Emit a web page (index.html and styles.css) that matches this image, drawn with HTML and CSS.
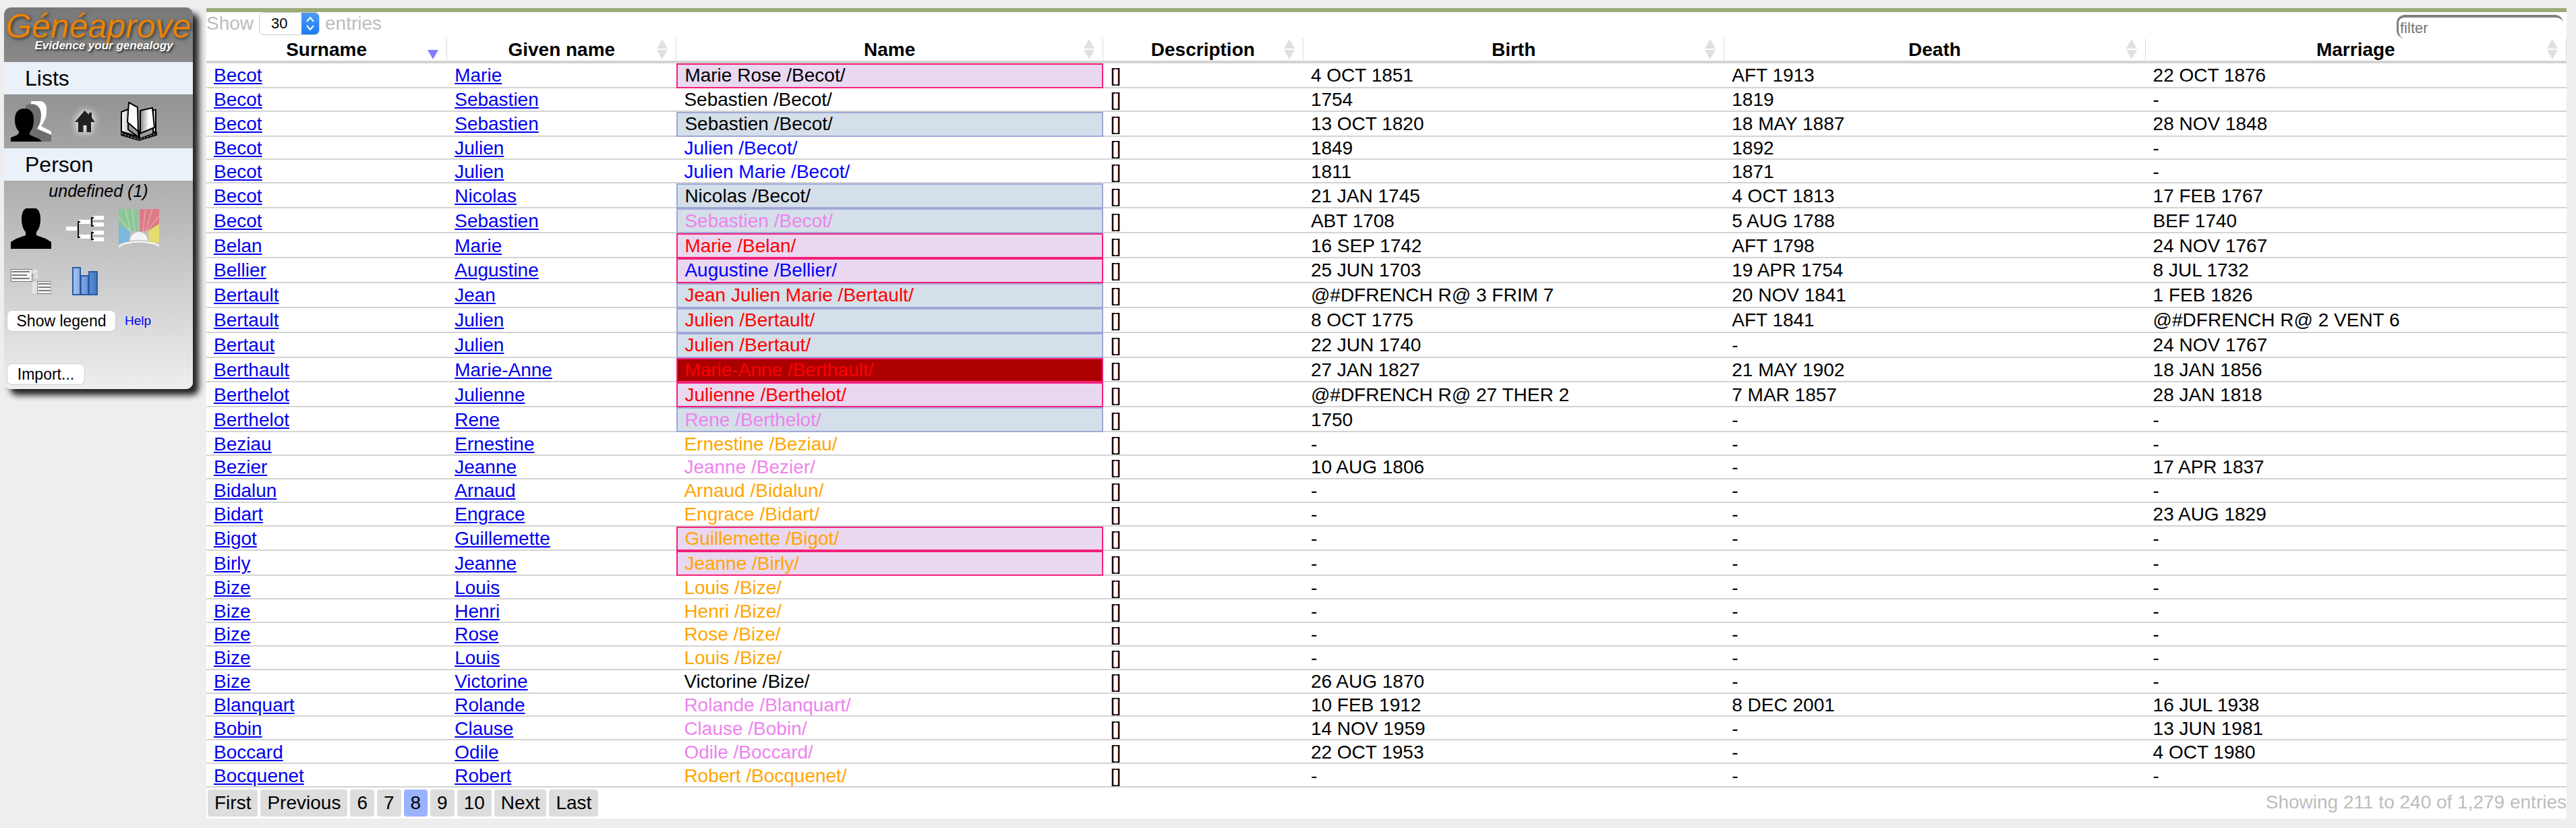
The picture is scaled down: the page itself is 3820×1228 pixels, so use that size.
FILE: index.html
```html
<!DOCTYPE html>
<html lang="fr">
<head>
    <meta charset="UTF-8">
    <title>Généaprove</title>
    <link rel="stylesheet" href="styles.css">
</head>
<body>

    <aside class="sidebar">
        <div class="logo">
            <div class="logo-name">Généaprove</div>
            <div class="logo-tag">Evidence your genealogy</div>
        </div>

        <div class="side-bar-title">Lists</div>
        <div class="icon-grid icon-grid-top">
            <svg width="60" height="60" viewBox="0 0 60 60">
                <path d="M30 0h15q8 2 8 12 0 12-3 16-2 5-5 9l15 8v9H30z" fill="#fff"/>
                <path d="M22 6q8-3 14-1 8 3 9 14 0 12-4 18l-2 4 21 9v10H20z" fill="#6e6e6e"/>
                <path d="M20 11q14 0 14 17 0 12-6 18v4l14 6 4 4H0v-6l10-4 2-3v-2q-6-6-6-17 0-17 14-17z" fill="#000"/>
            </svg>
            <svg class="home-icon" width="30" height="32" viewBox="0 0 30 32">
                <path d="M14.500 0 21 6V3h4v7l4.500 7H24v15h-6.500V22h-5v10H5V17H0L14.500 0z" fill="#222"/>
            </svg>
            <svg width="58" height="58" viewBox="0 0 58 58">
                <defs>
                    <linearGradient id="page-right"><stop offset="0" stop-color="#888"/><stop offset="0.6" stop-color="#fff"/></linearGradient>
                    <linearGradient id="page-left"><stop offset="0" stop-color="#fff"/><stop offset="1" stop-color="#777"/></linearGradient>
                </defs>
                <path d="M2 44 29 54l27-10v6L29 58 2 50z" fill="#111"/>
                <path d="M3 15 13 11v30l15 11L3 44z" fill="url(#page-left)" stroke="#000" stroke-width="2"/>
                <path d="M50 12h4v32l-4 2z" fill="#ccc" stroke="#000" stroke-width="2"/>
                <path d="M31 13 49 9l3 29-21 9z" fill="url(#page-right)" stroke="#000" stroke-width="2"/>
                <path d="M14 1 27 8l1 36-16-14z" fill="#fff" stroke="#000" stroke-width="2"/>
                <path d="M28 42 30 56" stroke="#000" stroke-width="3"/>
                <path d="M3 47 29 56 55 47" fill="none" stroke="#ddd" stroke-width="1" stroke-dasharray="2 3"/>
            </svg>
        </div>

        <div class="side-bar-title">Person</div>
        <div class="person-name">undefined (1)</div>
        <div class="icon-grid icon-grid-person">
            <svg width="60" height="60" viewBox="0 0 60 60">
                <path d="M30 -2q14 0 14 18 0 13-6 19v5l14 5 8 5v10H0V50l8-5 14-5v-5q-6-6-6-19 0-18 14-18z" fill="#000"/>
            </svg>
            <svg width="56" height="38" viewBox="0 0 56 38">
                <path d="M0 16h16v6H0zM19 6h17v6H19zM19 28h17v6H19zM40 0h16v6H40zM40 10h16v6H40zM40 22h16v6H40zM40 32h16v6H40z" fill="#fff"/>
                <path d="M21 9h-3v23h3M41 3h-3v12h3M41 25h-3v10h3" fill="none" stroke="#111" stroke-width="2"/>
            </svg>
            <svg width="60" height="58" viewBox="0 0 60 58">
                <path d="M0 0h29v33H17l-17-10z" fill="#8cc596"/>
                <path d="M31 0h29v22L43 33H31z" fill="#dc7b85"/>
                <path d="M60 22v28H45q0-10-2-17z" fill="#e4dc6c"/>
                <path d="M0 23l17 10-2 15-15 4z" fill="#7ab8dd"/>
                <path d="M10 0 18 33M20 0 24 33M40 0 36 33M50 0 40 33M0 12 17 33M60 10 42 33" stroke="#fff" stroke-opacity="0.25" stroke-width="2"/>
                <path d="M17 47a13 13 0 0 1 26 0q-13-2-26 0z" fill="#f4f4f4"/>
                <path d="M0 57Q2 52 15 50q15-3 30 0 13 2 15 5" fill="none" stroke="#f4f4f4" stroke-width="2.500"/>
            </svg>
            <svg width="60" height="37" viewBox="0 0 60 37">
                <path d="M.500 .500h31v18h-31zM39.500 18.500h20.500v18H39.500z" fill="#f4f4f4" stroke="#777"/>
                <path d="M31.500 1h8v6h-8zM36 8h4v6h-4zM32 19h7v17h-7z" fill="#e4e4e4"/>
                <path d="M2 4h26M2 9h22M2 14h26M41 22h18M41 27h18M41 32h18" stroke="#555" stroke-width="1.500"/>
            </svg>
            <svg width="38" height="42" viewBox="0 0 38 42">
                <defs>
                    <linearGradient id="bar-fill"><stop offset="0" stop-color="#a8c6ee"/><stop offset="1" stop-color="#3c74c4"/></linearGradient>
                </defs>
                <path d="M1 1h11v40H1zM13 13h11v28H13zM25 7h12v34H25z" fill="url(#bar-fill)" stroke="#2a5aa8" stroke-width="2"/>
            </svg>
        </div>

        <div class="legend-row">
            <button class="side-button legend-button">Show legend</button>
            <a class="help-link" href="#">Help</a>
        </div>
        <button class="side-button import-button">Import...</button>
    </aside>

    <main class="panel">
        <div class="table-top">
            <div class="length-control">
                Show
                <span class="select-box"><span class="select-value">30</span><span class="select-arrows">
                    <svg width="14" height="24" viewBox="0 0 14 24"><path d="M2 9l5-6 5 6M2 15l5 6 5-6" fill="none" stroke="#fff" stroke-width="2"/></svg>
                </span></span>
                entries
            </div>
            <input class="filter-input" type="text" placeholder="filter">
        </div>

        <table class="people">
            <colgroup>
                <col class="col-surname"><col class="col-given"><col class="col-name"><col class="col-desc"><col class="col-date"><col class="col-date"><col class="col-date">
            </colgroup>
            <thead>
                <tr>
                    <th class="sort-desc">Surname</th>
                    <th class="sortable">Given name</th>
                    <th class="sortable">Name</th>
                    <th class="sortable">Description</th>
                    <th class="sortable">Birth</th>
                    <th class="sortable">Death</th>
                    <th class="sortable">Marriage</th>
                </tr>
            </thead>
            <tbody>
                <tr class="tall"><td><a href="#">Becot</a></td><td><a href="#">Marie</a></td><td class="box-pink">Marie Rose /Becot/</td><td>[]</td><td>4 OCT 1851</td><td>AFT 1913</td><td>22 OCT 1876</td></tr>
                <tr><td><a href="#">Becot</a></td><td><a href="#">Sebastien</a></td><td>Sebastien /Becot/</td><td>[]</td><td>1754</td><td>1819</td><td>-</td></tr>
                <tr class="tall"><td><a href="#">Becot</a></td><td><a href="#">Sebastien</a></td><td class="box-blue">Sebastien /Becot/</td><td>[]</td><td>13 OCT 1820</td><td>18 MAY 1887</td><td>28 NOV 1848</td></tr>
                <tr><td><a href="#">Becot</a></td><td><a href="#">Julien</a></td><td class="txt-blue">Julien /Becot/</td><td>[]</td><td>1849</td><td>1892</td><td>-</td></tr>
                <tr><td><a href="#">Becot</a></td><td><a href="#">Julien</a></td><td class="txt-blue">Julien Marie /Becot/</td><td>[]</td><td>1811</td><td>1871</td><td>-</td></tr>
                <tr class="tall"><td><a href="#">Becot</a></td><td><a href="#">Nicolas</a></td><td class="box-blue">Nicolas /Becot/</td><td>[]</td><td>21 JAN 1745</td><td>4 OCT 1813</td><td>17 FEB 1767</td></tr>
                <tr class="tall"><td><a href="#">Becot</a></td><td><a href="#">Sebastien</a></td><td class="box-blue txt-violet">Sebastien /Becot/</td><td>[]</td><td>ABT 1708</td><td>5 AUG 1788</td><td>BEF 1740</td></tr>
                <tr class="tall"><td><a href="#">Belan</a></td><td><a href="#">Marie</a></td><td class="box-pink txt-red">Marie /Belan/</td><td>[]</td><td>16 SEP 1742</td><td>AFT 1798</td><td>24 NOV 1767</td></tr>
                <tr class="tall"><td><a href="#">Bellier</a></td><td><a href="#">Augustine</a></td><td class="box-pink txt-blue">Augustine /Bellier/</td><td>[]</td><td>25 JUN 1703</td><td>19 APR 1754</td><td>8 JUL 1732</td></tr>
                <tr class="tall"><td><a href="#">Bertault</a></td><td><a href="#">Jean</a></td><td class="box-blue txt-red">Jean Julien Marie /Bertault/</td><td>[]</td><td>@#DFRENCH R@ 3 FRIM 7</td><td>20 NOV 1841</td><td>1 FEB 1826</td></tr>
                <tr class="tall"><td><a href="#">Bertault</a></td><td><a href="#">Julien</a></td><td class="box-blue txt-red">Julien /Bertault/</td><td>[]</td><td>8 OCT 1775</td><td>AFT 1841</td><td>@#DFRENCH R@ 2 VENT 6</td></tr>
                <tr class="tall"><td><a href="#">Bertaut</a></td><td><a href="#">Julien</a></td><td class="box-blue txt-red">Julien /Bertaut/</td><td>[]</td><td>22 JUN 1740</td><td>-</td><td>24 NOV 1767</td></tr>
                <tr class="tall"><td><a href="#">Berthault</a></td><td><a href="#">Marie-Anne</a></td><td class="box-dark txt-red">Marie-Anne /Berthault/</td><td>[]</td><td>27 JAN 1827</td><td>21 MAY 1902</td><td>18 JAN 1856</td></tr>
                <tr class="tall"><td><a href="#">Berthelot</a></td><td><a href="#">Julienne</a></td><td class="box-pink txt-red">Julienne /Berthelot/</td><td>[]</td><td>@#DFRENCH R@ 27 THER 2</td><td>7 MAR 1857</td><td>28 JAN 1818</td></tr>
                <tr class="tall"><td><a href="#">Berthelot</a></td><td><a href="#">Rene</a></td><td class="box-blue txt-violet">Rene /Berthelot/</td><td>[]</td><td>1750</td><td>-</td><td>-</td></tr>
                <tr><td><a href="#">Beziau</a></td><td><a href="#">Ernestine</a></td><td class="txt-orange">Ernestine /Beziau/</td><td>[]</td><td>-</td><td>-</td><td>-</td></tr>
                <tr><td><a href="#">Bezier</a></td><td><a href="#">Jeanne</a></td><td class="txt-violet">Jeanne /Bezier/</td><td>[]</td><td>10 AUG 1806</td><td>-</td><td>17 APR 1837</td></tr>
                <tr><td><a href="#">Bidalun</a></td><td><a href="#">Arnaud</a></td><td class="txt-orange">Arnaud /Bidalun/</td><td>[]</td><td>-</td><td>-</td><td>-</td></tr>
                <tr><td><a href="#">Bidart</a></td><td><a href="#">Engrace</a></td><td class="txt-orange">Engrace /Bidart/</td><td>[]</td><td>-</td><td>-</td><td>23 AUG 1829</td></tr>
                <tr class="tall"><td><a href="#">Bigot</a></td><td><a href="#">Guillemette</a></td><td class="box-pink txt-orange">Guillemette /Bigot/</td><td>[]</td><td>-</td><td>-</td><td>-</td></tr>
                <tr class="tall"><td><a href="#">Birly</a></td><td><a href="#">Jeanne</a></td><td class="box-pink txt-orange">Jeanne /Birly/</td><td>[]</td><td>-</td><td>-</td><td>-</td></tr>
                <tr><td><a href="#">Bize</a></td><td><a href="#">Louis</a></td><td class="txt-orange">Louis /Bize/</td><td>[]</td><td>-</td><td>-</td><td>-</td></tr>
                <tr><td><a href="#">Bize</a></td><td><a href="#">Henri</a></td><td class="txt-orange">Henri /Bize/</td><td>[]</td><td>-</td><td>-</td><td>-</td></tr>
                <tr><td><a href="#">Bize</a></td><td><a href="#">Rose</a></td><td class="txt-orange">Rose /Bize/</td><td>[]</td><td>-</td><td>-</td><td>-</td></tr>
                <tr><td><a href="#">Bize</a></td><td><a href="#">Louis</a></td><td class="txt-orange">Louis /Bize/</td><td>[]</td><td>-</td><td>-</td><td>-</td></tr>
                <tr><td><a href="#">Bize</a></td><td><a href="#">Victorine</a></td><td>Victorine /Bize/</td><td>[]</td><td>26 AUG 1870</td><td>-</td><td>-</td></tr>
                <tr><td><a href="#">Blanquart</a></td><td><a href="#">Rolande</a></td><td class="txt-violet">Rolande /Blanquart/</td><td>[]</td><td>10 FEB 1912</td><td>8 DEC 2001</td><td>16 JUL 1938</td></tr>
                <tr><td><a href="#">Bobin</a></td><td><a href="#">Clause</a></td><td class="txt-violet">Clause /Bobin/</td><td>[]</td><td>14 NOV 1959</td><td>-</td><td>13 JUN 1981</td></tr>
                <tr><td><a href="#">Boccard</a></td><td><a href="#">Odile</a></td><td class="txt-violet">Odile /Boccard/</td><td>[]</td><td>22 OCT 1953</td><td>-</td><td>4 OCT 1980</td></tr>
                <tr><td><a href="#">Bocquenet</a></td><td><a href="#">Robert</a></td><td class="txt-orange">Robert /Bocquenet/</td><td>[]</td><td>-</td><td>-</td><td>-</td></tr>
            </tbody>
        </table>

        <div class="table-bottom">
            <div class="pager">
                <a class="page-button" href="#">First</a>
                <a class="page-button" href="#">Previous</a>
                <a class="page-button" href="#">6</a>
                <a class="page-button" href="#">7</a>
                <a class="page-button current" href="#">8</a>
                <a class="page-button" href="#">9</a>
                <a class="page-button" href="#">10</a>
                <a class="page-button" href="#">Next</a>
                <a class="page-button" href="#">Last</a>
            </div>
            <div class="table-info">Showing 211 to 240 of 1,279 entries</div>
        </div>
    </main>

</body>
</html>
```

FILE: styles.css
```css
html {
    height: 100%;
}

body {
    margin: 0;
    padding: 11px 14px 14px 6px;
    box-sizing: border-box;
    height: 1228px;
    overflow: hidden;
    display: flex;
    align-items: flex-start;
    gap: 20px;
    background-color: #eeeeee;
    color: #000;
    font-family: "Liberation Sans", Arial, sans-serif;
    font-size: 28px;
}

/* left menu */
.sidebar {
    flex: 0 0 280px;
    height: 566px;
    border-radius: 10px;
    background: linear-gradient(to bottom, #787878 0%, #eeeeee 100%);
    box-shadow: 9px 9px 10px #222;
}

.logo {
    height: 81px;
    padding-top: 4px;
    box-sizing: border-box;
    text-align: center;
}

.logo-name {
    font-size: 50px;
    line-height: 49px;
    font-style: italic;
    color: #ea8207;
    text-shadow: 2px 2px 5px #333;
}

.logo-tag {
    margin-top: -5px;
    padding-left: 16px;
    font-size: 17px;
    line-height: 17px;
    font-weight: bold;
    font-style: italic;
    color: #fff;
    text-shadow: 2px 2px 3px #222;
}

.side-bar-title {
    height: 48px;
    padding-left: 31px;
    line-height: 48px;
    font-size: 32px;
    background-color: #eaf1f9;
}

.icon-grid {
    display: grid;
    grid-template-columns: repeat(3, 80px);
    justify-items: center;
    align-items: center;
}

.icon-grid-top {
    height: 80px;
}

.home-icon {
    filter: drop-shadow(0 0 5px #e8e8e8) drop-shadow(0 0 5px #d0d0d0);
}

.person-name {
    height: 41px;
    line-height: 30px;
    text-align: center;
    font-size: 25px;
    font-style: italic;
}

.icon-grid-person {
    grid-template-rows: 60px 42px;
    row-gap: 27px;
}

.legend-row {
    display: flex;
    align-items: center;
    gap: 13px;
    margin: 22px 0 0 4px;
}

.side-button {
    height: 32px;
    padding: 0;
    border: 1px solid #ccc;
    border-radius: 8px;
    background-color: #fff;
    font-family: inherit;
    font-size: 23px;
    color: #000;
}

.legend-button {
    width: 162px;
}

.import-button {
    display: block;
    width: 116px;
    margin: 47px 0 0 4px;
}

.help-link {
    font-size: 19px;
    color: #0000ff;
    text-decoration: none;
}

/* main panel */
.panel {
    flex: 1;
    margin-top: 1px;
    border-top: 6px solid #9dab78;
    background-color: #fff;
}

.table-top {
    height: 39px;
    display: flex;
    justify-content: space-between;
}

.length-control {
    display: flex;
    align-items: center;
    gap: 8px;
    height: 34px;
    color: #bdbdbd;
}

.select-box {
    display: flex;
    width: 90px;
    height: 34px;
    box-sizing: border-box;
    border: 1px solid #ccc;
    border-radius: 7px;
    overflow: hidden;
    background-color: #fff;
}

.select-value {
    flex: 1;
    padding-left: 17px;
    font-size: 22px;
    line-height: 32px;
    color: #000;
}

.select-arrows {
    display: flex;
    align-items: center;
    justify-content: center;
    width: 26px;
    background: linear-gradient(to bottom, #4b9bf0, #1c7cf8);
}

.filter-input {
    width: 247px;
    height: 35px;
    margin: 4px 5px 0 0;
    padding: 0 0 0 2px;
    box-sizing: border-box;
    border: 0;
    border-top: 4px solid #808080;
    border-left: 3px solid #808080;
    border-radius: 12px;
    font-family: inherit;
    font-size: 22px;
    outline: none;
}

.filter-input::placeholder {
    color: #757575;
}

.people {
    width: 100%;
    table-layout: fixed;
    border-collapse: separate;
    border-spacing: 0;
}

.col-surname { width: 357px; }
.col-given { width: 340px; }
.col-name { width: 632px; }
.col-desc { width: 297px; }
.col-date { width: 624px; }

.people th {
    position: relative;
    height: 37px;
    padding: 0;
    box-sizing: border-box;
    border-right: 1px solid #ddd;
    border-bottom: 4px solid #d3d3d3;
    font-weight: bold;
    text-align: center;
}

/* sort arrows */
.sortable::before,
.sortable::after,
.sort-desc::after {
    content: "";
    position: absolute;
    right: 12px;
    border-left: 8px solid transparent;
    border-right: 8px solid transparent;
}

.sortable::before {
    top: 1px;
    border-bottom: 14px solid #e0e0e0;
}

.sortable::after {
    top: 17px;
    border-top: 14px solid #e0e0e0;
}

.sort-desc::after {
    top: 17px;
    border-top: 14px solid #8080ff;
}

.people tbody tr {
    height: 34.85px;
}

.people tbody tr.tall {
    height: 36.9px;
}

.people td {
    padding: 2px 11px 0;
    box-sizing: border-box;
    border-bottom: 2px solid #d3d3d3;
    line-height: 30px;
    white-space: nowrap;
    overflow: hidden;
}

.people a {
    color: #0000ee;
}

.txt-blue { color: #0000ff; }
.txt-red { color: #ff0000; }
.txt-violet { color: #ee82ee; }
.txt-orange { color: #ffa500; }

.people td.box-pink,
.people td.box-blue,
.people td.box-dark {
    border: 2px solid;
    padding: 0 10px;
}

.people td.box-pink {
    border-color: #f5207a;
    background-color: #e9d8f0;
}

.people td.box-blue {
    border-color: #a0a8d8;
    background-color: #d5dfe9;
}

.people td.box-dark {
    border-color: #f5207a;
    background-color: #aa0000;
}

/* footer */
.table-bottom {
    height: 46px;
    display: flex;
    justify-content: space-between;
}

.pager {
    display: flex;
    gap: 4px;
    padding: 3px 0 0 2px;
}

.page-button {
    height: 40px;
    padding: 0 10px;
    border-radius: 4px;
    background-color: #dddddd;
    line-height: 40px;
    color: #000;
    text-decoration: none;
}

.page-button.current {
    background-color: #99b3ff;
}

.table-info {
    padding-top: 2px;
    line-height: 40px;
    color: #bdbdbd;
}
```
